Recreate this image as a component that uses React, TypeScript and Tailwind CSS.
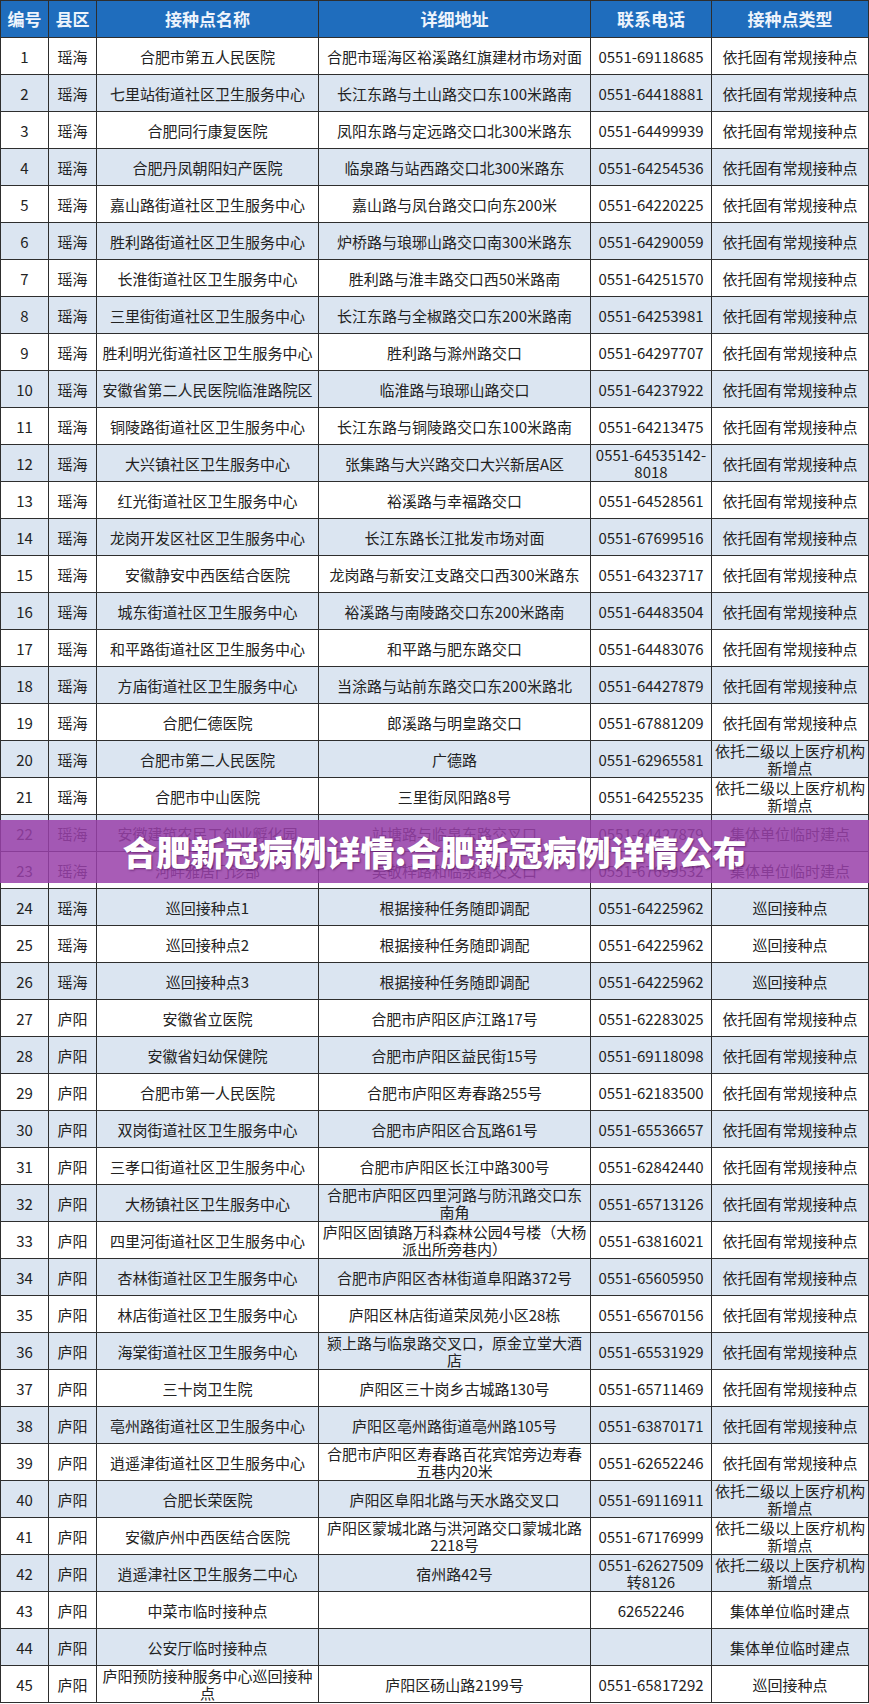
const COMMON = "依托固有常规接种点";
const HOSPITAL = "依托二级以上医疗机构\n新增点";
const TEMP = "集体单位临时建点";
const MOBILE = "巡回接种点";

type Row = [string, string, string, string, string];

const rows: Row[] = [
  ["瑶海", "合肥市第五人民医院", "合肥市瑶海区裕溪路红旗建材市场对面", "0551-69118685", COMMON],
  ["瑶海", "七里站街道社区卫生服务中心", "长江东路与土山路交口东100米路南", "0551-64418881", COMMON],
  ["瑶海", "合肥同行康复医院", "凤阳东路与定远路交口北300米路东", "0551-64499939", COMMON],
  ["瑶海", "合肥丹凤朝阳妇产医院", "临泉路与站西路交口北300米路东", "0551-64254536", COMMON],
  ["瑶海", "嘉山路街道社区卫生服务中心", "嘉山路与凤台路交口向东200米", "0551-64220225", COMMON],
  ["瑶海", "胜利路街道社区卫生服务中心", "炉桥路与琅琊山路交口南300米路东", "0551-64290059", COMMON],
  ["瑶海", "长淮街道社区卫生服务中心", "胜利路与淮丰路交口西50米路南", "0551-64251570", COMMON],
  ["瑶海", "三里街街道社区卫生服务中心", "长江东路与全椒路交口东200米路南", "0551-64253981", COMMON],
  ["瑶海", "胜利明光街道社区卫生服务中心", "胜利路与滁州路交口", "0551-64297707", COMMON],
  ["瑶海", "安徽省第二人民医院临淮路院区", "临淮路与琅琊山路交口", "0551-64237922", COMMON],
  ["瑶海", "铜陵路街道社区卫生服务中心", "长江东路与铜陵路交口东100米路南", "0551-64213475", COMMON],
  ["瑶海", "大兴镇社区卫生服务中心", "张集路与大兴路交口大兴新居A区", "0551-64535142-\n8018", COMMON],
  ["瑶海", "红光街道社区卫生服务中心", "裕溪路与幸福路交口", "0551-64528561", COMMON],
  ["瑶海", "龙岗开发区社区卫生服务中心", "长江东路长江批发市场对面", "0551-67699516", COMMON],
  ["瑶海", "安徽静安中西医结合医院", "龙岗路与新安江支路交口西300米路东", "0551-64323717", COMMON],
  ["瑶海", "城东街道社区卫生服务中心", "裕溪路与南陵路交口东200米路南", "0551-64483504", COMMON],
  ["瑶海", "和平路街道社区卫生服务中心", "和平路与肥东路交口", "0551-64483076", COMMON],
  ["瑶海", "方庙街道社区卫生服务中心", "当涂路与站前东路交口东200米路北", "0551-64427879", COMMON],
  ["瑶海", "合肥仁德医院", "郎溪路与明皇路交口", "0551-67881209", COMMON],
  ["瑶海", "合肥市第二人民医院", "广德路", "0551-62965581", HOSPITAL],
  ["瑶海", "合肥市中山医院", "三里街凤阳路8号", "0551-64255235", HOSPITAL],
  ["瑶海", "安徽建筑农民工创业孵化园", "站塘路与临泉东路交叉口", "0551-64427879", TEMP],
  ["瑶海", "河畔雅居门诊部", "吴敬梓路和临泉路交叉口", "0551-67699532", TEMP],
  ["瑶海", "巡回接种点1", "根据接种任务随即调配", "0551-64225962", MOBILE],
  ["瑶海", "巡回接种点2", "根据接种任务随即调配", "0551-64225962", MOBILE],
  ["瑶海", "巡回接种点3", "根据接种任务随即调配", "0551-64225962", MOBILE],
  ["庐阳", "安徽省立医院", "合肥市庐阳区庐江路17号", "0551-62283025", COMMON],
  ["庐阳", "安徽省妇幼保健院", "合肥市庐阳区益民街15号", "0551-69118098", COMMON],
  ["庐阳", "合肥市第一人民医院", "合肥市庐阳区寿春路255号", "0551-62183500", COMMON],
  ["庐阳", "双岗街道社区卫生服务中心", "合肥市庐阳区合瓦路61号", "0551-65536657", COMMON],
  ["庐阳", "三孝口街道社区卫生服务中心", "合肥市庐阳区长江中路300号", "0551-62842440", COMMON],
  ["庐阳", "大杨镇社区卫生服务中心", "合肥市庐阳区四里河路与防汛路交口东\n南角", "0551-65713126", COMMON],
  ["庐阳", "四里河街道社区卫生服务中心", "庐阳区固镇路万科森林公园4号楼（大杨\n派出所旁巷内）", "0551-63816021", COMMON],
  ["庐阳", "杏林街道社区卫生服务中心", "合肥市庐阳区杏林街道阜阳路372号", "0551-65605950", COMMON],
  ["庐阳", "林店街道社区卫生服务中心", "庐阳区林店街道荣凤苑小区28栋", "0551-65670156", COMMON],
  ["庐阳", "海棠街道社区卫生服务中心", "颍上路与临泉路交叉口，原金立堂大酒\n店", "0551-65531929", COMMON],
  ["庐阳", "三十岗卫生院", "庐阳区三十岗乡古城路130号", "0551-65711469", COMMON],
  ["庐阳", "亳州路街道社区卫生服务中心", "庐阳区亳州路街道亳州路105号", "0551-63870171", COMMON],
  ["庐阳", "逍遥津街道社区卫生服务中心", "合肥市庐阳区寿春路百花宾馆旁边寿春\n五巷内20米", "0551-62652246", COMMON],
  ["庐阳", "合肥长荣医院", "庐阳区阜阳北路与天水路交叉口", "0551-69116911", HOSPITAL],
  ["庐阳", "安徽庐州中西医结合医院", "庐阳区蒙城北路与洪河路交口蒙城北路\n2218号", "0551-67176999", HOSPITAL],
  ["庐阳", "逍遥津社区卫生服务二中心", "宿州路42号", "0551-62627509\n转8126", HOSPITAL],
  ["庐阳", "中菜市临时接种点", "", "62652246", TEMP],
  ["庐阳", "公安厅临时接种点", "", "", TEMP],
  ["庐阳", "庐阳预防接种服务中心巡回接种\n点", "庐阳区砀山路2199号", "0551-65817292", MOBILE],
];

const headers = ["编号", "县区", "接种点名称", "详细地址", "联系电话", "接种点类型"];

const gridCols = "grid grid-cols-[48px_48px_222px_272px_121px_157px]";

export default function App() {
  return (
    <div className="relative w-[869px] bg-white font-['Noto_Sans_CJK_SC','Noto_Sans',sans-serif] text-[#222]">
      <div className="border-l border-t border-[#2e2e2e]">
        <div className={`${gridCols} bg-[#1f6dbd]`}>
          {headers.map((h) => (
            <div
              key={h}
              className="flex h-[37px] items-center justify-center border-r border-b border-[#2e2e2e] text-[17px] font-bold text-[#eef4fc]"
            >
              {h}
            </div>
          ))}
        </div>

        {rows.map((row, i) => (
          <div
            key={i}
            className={`${gridCols} ${i % 2 === 1 ? "bg-[#dbe5f1]" : "bg-white"}`}
          >
            <Cell>{String(i + 1)}</Cell>
            <Cell>{row[0]}</Cell>
            <Cell>{row[1]}</Cell>
            <Cell>{row[2]}</Cell>
            <Cell>{row[3]}</Cell>
            <Cell>{row[4]}</Cell>
          </div>
        ))}
      </div>

      {/* watermark banner across rows 22-23 */}
      <div className="absolute left-0 top-[820px] flex h-[63px] w-full items-center justify-center bg-[rgba(153,63,169,0.85)]">
        <p className="text-[34px] font-black leading-none text-white [text-shadow:1px_1px_2px_rgba(60,0,70,0.55)]">
          合肥新冠病例详情:合肥新冠病例详情公布
        </p>
      </div>
    </div>
  );
}

function Cell({ children }: { children: string }) {
  return (
    <div className="flex h-[37px] items-center justify-center overflow-hidden whitespace-pre-line border-r border-b border-[#2e2e2e] px-0.5 text-center text-[15px] leading-[17px]">
      {children}
    </div>
  );
}
